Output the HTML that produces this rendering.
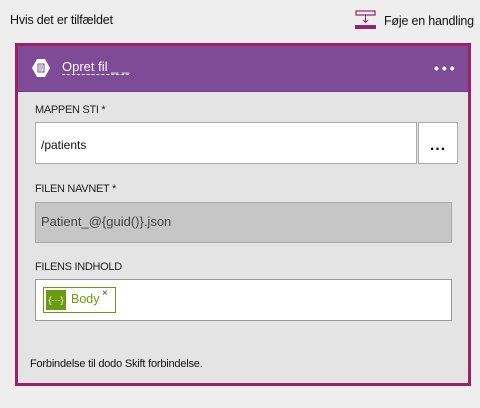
<!DOCTYPE html>
<html><head><style>
body{margin:0;width:480px;height:408px;background:#eeeeee;font-family:"Liberation Sans",sans-serif;position:relative;overflow:hidden;color:#111}
.a{position:absolute}
.lbl{font-size:11px;color:#222;letter-spacing:-0.3px}
</style></head><body>
<div class="a" style="left:10px;top:13px;font-size:12.5px;letter-spacing:-0.2px">Hvis det er tilfældet</div>
<svg class="a" style="left:355px;top:10px" width="22" height="20"><rect x="1" y="1" width="19" height="4" fill="none" stroke="#9b2264" stroke-width="1.2"/><path d="M10.5 5v7M8 10l2.5 2.5L13 10" stroke="#9b2264" fill="none" stroke-width="1"/><rect x="0" y="15" width="21" height="4" fill="#9b2264"/></svg>
<div class="a" style="left:384px;top:14px;font-size:12.5px;letter-spacing:-0.2px">Føje en handling</div>
<div class="a" style="left:15px;top:43px;width:450px;height:337px;border:3px solid #9b2264;background:#e4e4e4"></div>
<div class="a" style="left:18px;top:46px;width:450px;height:45px;background:#7f4a96;border-bottom:1px solid #6d3d82"></div>
<svg class="a" style="left:31px;top:58px" width="20" height="20"><polygon points="6,1 14,1 19,10 14,19 6,19 1,10" fill="#fff"/><rect x="7" y="6" width="6" height="8" fill="none" stroke="#7f4a96" stroke-width="1"/><path d="M8 8h4M8 10h4M8 12h3" stroke="#7f4a96" stroke-width=".8"/></svg>
<div class="a" style="left:62px;top:60px;font-size:13px;color:#fff;border-bottom:1px dashed #fff;line-height:14px">Opret fil _ _</div>
<div class="a" style="left:434px;top:60px;font-size:14px;color:#fff;letter-spacing:3px;font-weight:bold">•••</div>
<div class="a lbl" style="left:35px;top:104px">MAPPEN STI *</div>
<div class="a" style="left:35px;top:122px;width:380px;height:40px;background:#fff;border:1px solid #aaa"></div>
<div class="a" style="left:41px;top:138px;font-size:12px">/patients</div>
<div class="a" style="left:418px;top:122px;width:38px;height:40px;background:#fff;border:1px solid #aaa;text-align:center;font-size:16px;font-weight:bold;line-height:46px;letter-spacing:1px">...</div>
<div class="a lbl" style="left:35px;top:183px">FILEN NAVNET *</div>
<div class="a" style="left:35px;top:202px;width:415px;height:39px;background:#c6c6c6;border:1px solid #aaa"></div>
<div class="a" style="left:41px;top:214px;font-size:13px;color:#444">Patient_@{guid()}.json</div>
<div class="a lbl" style="left:35px;top:261px">FILENS INDHOLD</div>
<div class="a" style="left:35px;top:279px;width:415px;height:40px;background:#fff;border:1px solid #999"></div>
<div class="a" style="left:43px;top:287px;width:71px;height:24px;border:1px solid #6b9c0f;background:#fff"></div>
<div class="a" style="left:46px;top:290px;width:20px;height:20px;background:#6b9c0f;color:#fff;font-size:9px;text-align:center;line-height:20px">{···}</div>
<div class="a" style="left:71px;top:292px;font-size:12.5px;color:#6b9c0f">Body</div>
<div class="a" style="left:102px;top:288px;font-size:10px;color:#444">×</div>
<div class="a" style="left:30px;top:358px;font-size:11px;letter-spacing:-0.2px">Forbindelse til dodo Skift forbindelse.</div>
</body></html>
